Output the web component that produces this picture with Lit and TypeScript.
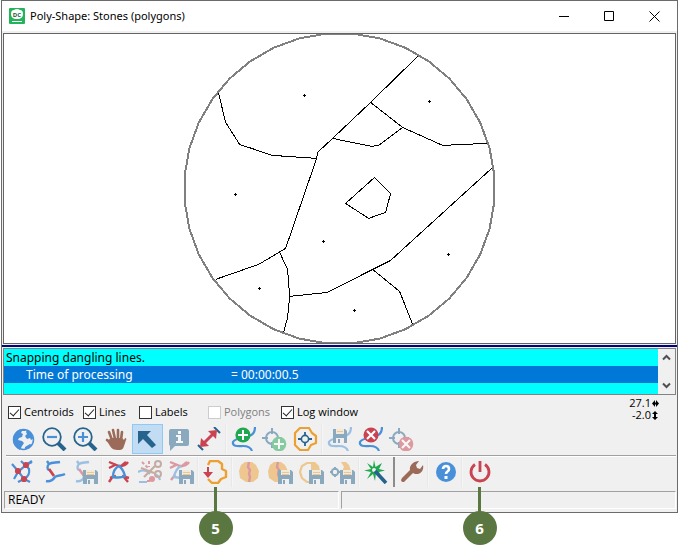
import { LitElement, html, svg, css, nothing, TemplateResult } from "lit";
import { customElement } from "lit/decorators.js";
import { classMap } from "lit/directives/class-map.js";

type Tool = {
  id: string;
  label: string;
  disabled?: boolean;
  active?: boolean;
  callout?: string;
};

const BLUE = "#4a90d9";
const NAVY = "#26648e";
const RED = "#c94450";
const GREEN = "#1fa850";
const ORANGE = "#eda032";
const BROWN = "#9c6a58";

const floppy = svg`
  <path fill=${NAVY} d="M10 10h13l2 2v12h-15z"/>
  <path fill="#f3e3c4" d="M13 10h9v5h-9z"/>
  <path fill=${ORANGE} d="M14 12h7v1h-7zM14 14h7v1h-7z"/>
  <path fill="#f0f0f0" d="M14 19h7v5h-7z"/>
  <path fill=${NAVY} d="M15 20h2v4h-2z"/>`;

const curve = svg`
  <path fill="none" stroke=${BLUE} stroke-width="2.2" d="M24 0c0 5-2 8-6 9-6 2-14 2-16 6-1 5 6 4 10 4 5 0 8 2 9 5"/>`;

const target = svg`
  <circle cx="10" cy="11" r="6" fill="none" stroke=${NAVY} stroke-width="2"/>
  <path stroke=${NAVY} stroke-width="2" d="M10 1v6M10 15v6M0 11h6M14 11h6"/>`;

const stone = "M8 2h7l4 3 3 6-1 7-5 4H9l-6-4-1-7 2-6z";

const icons: Record<string, TemplateResult> = {
  globe: svg`
    <circle cx="12.500" cy="12.500" r="10" fill="#f0f0f0" stroke=${BLUE} stroke-width="1.500"/>
    <path fill=${BLUE} d="M2 13C2 7 6 3 11 2h4l-1 2h-3l-1 2 2 1-1 3-3 1-1 2 4 1 2 2-2 3-2 4C5 21 2 17 2 13zM16 3c4 1 6 5 6 9l-2 1-1-2-3 1-2-3 2-2-1-2zM14 20l5-3 2 1c-1 2-4 4-7 4z"/>`,
  zoomOut: svg`
    <path stroke=${NAVY} stroke-width="4" d="M16 16l7 7"/>
    <circle cx="10" cy="10" r="8.800" fill="#f0f0f0" stroke=${NAVY} stroke-width="1.800"/>
    <path stroke=${BLUE} stroke-width="2.200" d="M5 10h10"/>`,
  zoomIn: svg`
    <path stroke=${NAVY} stroke-width="4" d="M16 16l7 7"/>
    <circle cx="10" cy="10" r="8.800" fill="#f0f0f0" stroke=${NAVY} stroke-width="1.800"/>
    <path stroke=${BLUE} stroke-width="2.200" d="M5 10h10M10 5v10"/>`,
  hand: svg`
    <g fill="none" stroke=${BROWN} stroke-width="2.600" stroke-linecap="round">
      <path d="M8 13L5 5M11 12L9 3M14 12V3M17 13l1-8M8 17l-5-4"/>
    </g>
    <path fill=${BROWN} d="M7 11h11l2 2 1-2c1 0 2 1 1 2l-2 6c-1 4-3 4-6 4-4 0-6-1-8-4L3 14z"/>`,
  pointer: svg`<path fill=${NAVY} d="M3 4h13l-4 4 9 10-4 3-9-9-5 5z"/>`,
  info: svg`
    <path fill=${NAVY} d="M5 2h16q2 0 2 2v13q0 2-2 2H9l-5 5v-5q-1-1-1-2V4q0-2 2-2z"/>
    <path fill="#fff" d="M12 4h3v3h-3zM10 8h5v6h2v2h-7v-2h2v-4h-2z"/>`,
  measure: svg`
    <path stroke=${NAVY} stroke-width="2" d="M1 18l5 5M17 0l6 6"/>
    <path stroke=${RED} stroke-width="3" d="M7 16l9-9"/>
    <path fill=${RED} d="M3 20l1-9 8 8zM20 3l-1 9-8-8z"/>`,
  lineAdd: svg`${curve}
    <circle cx="12" cy="8" r="7.600" fill=${GREEN}/>
    <path stroke="#fff" stroke-width="2" d="M7 8h10M12 3v10"/>`,
  pointAdd: svg`${target}
    <circle cx="17" cy="17" r="7.300" fill=${GREEN}/>
    <path stroke="#fff" stroke-width="2" d="M12 17h10M17 12v10"/>`,
  polygonPoint: svg`
    <path fill="none" stroke=${ORANGE} stroke-width="2.200" stroke-linejoin="round" d="M7 1h9l3 5 4 3v7l-5 2-3 5H7l-5-5V6z"/>
    <circle cx="12" cy="12" r="3.600" fill="none" stroke=${NAVY} stroke-width="1.600"/>
    <path stroke=${NAVY} stroke-width="1.800" d="M12 5v4M12 15v4M5 12h4M15 12h4"/>`,
  lineSave: svg`${curve}
    <path fill=${NAVY} d="M6 2h12l2 2v12H6z"/>
    <path fill="#f3e3c4" d="M9 2h8v5H9z"/><path fill=${ORANGE} d="M10 4h6v1h-6z"/>
    <path fill="#f0f0f0" d="M9 11h8v5H9z"/><path fill=${NAVY} d="M11 12h2v4h-2z"/>`,
  lineDelete: svg`${curve}
    <circle cx="13" cy="8" r="7.500" fill=${RED}/>
    <path stroke="#fff" stroke-width="2.200" d="M9 4l8 8M17 4l-8 8"/>`,
  pointDelete: svg`${target}
    <circle cx="17" cy="17" r="7.300" fill=${RED}/>
    <path stroke="#fff" stroke-width="2.200" d="M13 13l8 8M21 13l-8 8"/>`,
  nodes: svg`
    <path fill="none" stroke=${BLUE} stroke-width="2.200" d="M1 4l6 7M21 1l-6 4-8 7-4 7M7 11l6 8 6 3M15 5l6-3M15 5l3 4c1 5-1 8-5 10l-6 3M13 4l-3-3"/>
    <circle cx="15" cy="5" r="3.100" fill=${RED}/><circle cx="7" cy="11" r="3.100" fill=${RED}/><circle cx="13" cy="19" r="3.100" fill=${RED}/>`,
  snap: svg`
    <path fill="none" stroke=${BLUE} stroke-width="2.400" d="M18 2c-4 1-8 0-11 2-2 2-2 5 0 6M5 1l2 3M23 14c-4 2-8 1-10 3-2 3-4 5-9 4"/>
    <path stroke=${RED} stroke-width="2.800" d="M7 9l5 7"/>`,
  snapSave: svg`
    <path fill="none" stroke=${BLUE} stroke-width="2.400" d="M16 2c-4 1-7 0-10 2-2 2-2 5 0 6M4 1l2 3M3 21c4 1 7-1 8-4"/>
    <path stroke=${RED} stroke-width="2.600" d="M6 9l5 7"/>${floppy}`,
  cross: svg`
    <path fill="none" stroke=${RED} stroke-width="2.400" d="M2 2l10 4c4 0 7-1 9-4M8 5l-6 3M19 2l-6 5M6 16l-4 6M16 16l5 6M3 18l6-2M15 16l7 2"/>
    <path fill="none" stroke=${BLUE} stroke-width="2.400" d="M12 6c-4 2-6 6-6 11 5 1 8 1 12-1-1-4-2-7-6-10z"/>`,
  cut: svg`
    <path fill="none" stroke=${BLUE} stroke-width="2.200" d="M0 12c4-2 9-2 12 2M1 22h8M16 14c2 0 5 2 6 6"/>
    <path fill="none" stroke=${RED} stroke-width="2" stroke-dasharray="3 2" d="M4 2l6 6M11 1v6M9 21h3"/>
    <circle cx="14" cy="19" r="3" fill=${RED}/>
    <path stroke=${BROWN} stroke-width="2.200" d="M3 8l13 5M6 17l11-11"/>
    <circle cx="20" cy="4" r="3" fill="none" stroke=${BROWN} stroke-width="2"/><circle cx="20" cy="14" r="3" fill="none" stroke=${BROWN} stroke-width="2"/>`,
  crossSave: svg`
    <path fill="none" stroke=${RED} stroke-width="2.400" d="M1 2l10 4c4 0 7-1 9-4M7 5l-6 3M18 2l-6 5M2 20l4-5"/>
    <path fill="none" stroke=${BLUE} stroke-width="2.400" d="M12 6c-4 2-6 6-7 11l7 1"/>${floppy}`,
  polygonArrow: svg`
    <path fill="none" stroke=${ORANGE} stroke-width="2.400" stroke-linejoin="round" d="M5 5l2-4h8l4 3v5l4 2v6l-5 2-3 4H9l-4-4"/>
    <path fill=${RED} d="M4 7h2v5h4l-5 6-5-6h4z"/>`,
  stoneSplit: svg`
    <path fill=${ORANGE} d=${stone}/>
    <path fill="none" stroke=${RED} stroke-width="2.400" d="M12 2l-1 5 2 3-1 4 1 3-1 5"/>`,
  stoneSplitSave: svg`
    <path fill=${ORANGE} d="M6 2h7l4 3 3 6-1 7-5 4H7l-6-4-1-7 2-6z"/>
    <path fill="none" stroke=${RED} stroke-width="2.400" d="M10 2L9 7l2 3-1 4 1 3"/>${floppy}`,
  stoneHalfSave: svg`
    <path fill=${ORANGE} d="M12 2h4l4 4 1 5h-9z"/>
    <path fill="none" stroke=${ORANGE} stroke-width="2.200" d="M14 3H8L3 6l-2 6 2 6 5 4h3"/>${floppy}`,
  stonePointSave: svg`
    <path fill=${ORANGE} d="M11 2h5l3 3 2 6h-9l2-4z"/>
    <circle cx="5" cy="12" r="3.200" fill="none" stroke=${NAVY} stroke-width="2"/>
    <path stroke=${NAVY} stroke-width="2" d="M5 7v3M5 14v3M0 12h3M7 12h3"/>${floppy}`,
  wand: svg`
    <path fill=${GREEN} d="M10 0l1.500 7L18 3l-3 6 6 1.500-6 1.500 1 2-3-1-1 0-1 8-2-7-6 5 4-7-7-1.500 7-1.500L3 3l6 4z"/>
    <circle cx="10" cy="10" r="2" fill="#f0f0f0"/>
    <path stroke=${NAVY} stroke-width="3.600" d="M11 11l11 12"/>`,
  wrench: svg`<path fill=${BROWN} d="M17 1l3 0-3 4 1 3 3 1 3-4c1 4-1 8-5 9-2 0-4 0-5-1l-8 8c-1 2-4 1-4-1l1-2 8-8c-1-5 4-9 9-9z"/>`,
  help: svg`
    <circle cx="13" cy="12" r="10" fill=${BLUE}/>
    <path fill="none" stroke="#fff" stroke-width="2.600" d="M10 9c0-4 6-4 6 0 0 3-3 2-3 5"/>
    <path fill="#fff" d="M11.500 16h3v3h-3z"/>`,
  power: svg`
    <path fill="none" stroke=${RED} stroke-width="2.800" d="M8 4.500a9 9 0 1 0 10 0M13 1v11"/>`,
};

const viewTools: Tool[][] = [
  [
    { id: "globe", label: "Full extent" },
    { id: "zoomOut", label: "Zoom out" },
    { id: "zoomIn", label: "Zoom in" },
    { id: "hand", label: "Pan" },
    { id: "pointer", label: "Select", active: true },
    { id: "info", label: "Information", disabled: true },
    { id: "measure", label: "Measure" },
  ],
  [
    { id: "lineAdd", label: "Add line" },
    { id: "pointAdd", label: "Add centroid", disabled: true },
    { id: "polygonPoint", label: "Create centroids" },
  ],
  [
    { id: "lineSave", label: "Save lines", disabled: true },
    { id: "lineDelete", label: "Delete line" },
    { id: "pointDelete", label: "Delete centroid", disabled: true },
  ],
];

const shapeTools: Tool[][] = [
  [
    { id: "nodes", label: "Check nodes" },
    { id: "snap", label: "Snap dangling lines" },
    { id: "snapSave", label: "Save snapped lines", disabled: true },
  ],
  [
    { id: "cross", label: "Find intersections" },
    { id: "cut", label: "Cut lines", disabled: true },
    { id: "crossSave", label: "Save intersections", disabled: true },
  ],
  [{ id: "polygonArrow", label: "Build polygons", callout: "5" }],
  [
    { id: "stoneSplit", label: "Split polygons", disabled: true },
    { id: "stoneSplitSave", label: "Save split polygons", disabled: true },
    { id: "stoneHalfSave", label: "Save polygons", disabled: true },
    { id: "stonePointSave", label: "Save polygons and centroids", disabled: true },
  ],
  [{ id: "wand", label: "Automatic processing" }],
  [{ id: "wrench", label: "Settings" }],
  [{ id: "help", label: "Help" }],
  [{ id: "power", label: "Exit", callout: "6" }],
];

const layers = [
  { label: "Centroids", checked: true, disabled: false },
  { label: "Lines", checked: true, disabled: false },
  { label: "Labels", checked: false, disabled: false },
  { label: "Polygons", checked: false, disabled: true },
  { label: "Log window", checked: true, disabled: false },
];

const lines = [
  "219,93 226,122 240,144 273,155 317,158",
  "418,56 371,102 333,138 318,152 317,158 286,248 259,264 216,279",
  "371,102 403,127 443,145 487,143",
  "403,127 379,145 372,146 333,138",
  "375,177 391,193 386,212 369,218 346,203 375,177",
  "280,252 288,269 290,296 288,317 284,332",
  "290,296 328,292 373,269 391,260 492,168",
  "373,269 400,291 413,324",
];

const centroids = [
  [304, 95], [429, 101], [235, 194], [323, 241], [259, 288], [354, 310], [448, 254],
];

// The outer boundary is digitised as a regular 36-sided polygon.
const boundary = Array.from({ length: 36 }, (_, i) => {
  const a = ((i * 10 + 5) * Math.PI) / 180;
  return `${(339.5 + 155.4 * Math.cos(a)).toFixed(1)},${(188.5 + 155.4 * Math.sin(a)).toFixed(1)}`;
}).join(" ");

@customElement("tool-bar")
class ToolBar extends LitElement {
  static properties = { groups: { attribute: false } };
  declare groups: Tool[][];

  static styles = css`
    :host { display: block; }
    .bar { display: flex; height: 30px; padding-left: 5px; }
    .group { display: flex; }
    .group + .group { border-left: 1px solid #e8e8e8; box-shadow: inset 1px 0 #f6f6f6; padding-left: 2px; }
    .group.strong { border-left: 2px solid #8c8c8c; box-shadow: none; margin-left: 1px; padding-left: 1px; }
    .slot { position: relative; }
    button {
      display: flex; align-items: center; justify-content: center;
      width: 31px; height: 30px; padding: 0; border: 1px solid transparent; background: none;
    }
    .active { background: #c1dcf3; border-color: #90c8f6; }
    svg { display: block; width: 25px; height: 24px; flex: none; }
    button:disabled svg { opacity: 0.5; }
    .callout {
      position: absolute; z-index: 2; top: 100%; left: 0; width: 100%;
      display: flex; flex-direction: column; align-items: center; pointer-events: none;
    }
    .stem { width: 3px; height: 26px; background: #5b7741; }
    .badge {
      width: 34px; height: 34px; border-radius: 50%; margin-top: -2px;
      background: #5b7741; color: #fff; text-align: center;
      font: bold 15px/34px "Noto Sans", "Open Sans", sans-serif;
    }
  `;

  render() {
    return html`<div class="bar" role="toolbar">
      ${this.groups.map(
        (g) => html`<div class=${classMap({ group: true, strong: g[0].id === "wrench" })}>
          ${g.map(
            (t) => html`<div class="slot">
              <button class=${classMap({ active: !!t.active })} ?disabled=${!!t.disabled} aria-label=${t.label} title=${t.label}>
                <svg viewBox="0 0 25 24" aria-hidden="true">${icons[t.id]}</svg>
              </button>
              ${t.callout
                ? html`<div class="callout"><span class="stem"></span><span class="badge">${t.callout}</span></div>`
                : nothing}
            </div>`
          )}
        </div>`
      )}
    </div>`;
  }
}

@customElement("app-root")
class AppRoot extends LitElement {
  static styles = css`
    :host {
      display: block; min-height: 100vh; background: #fff; color: #000;
      font: 12px/16px "Open Sans", "Noto Sans", sans-serif;
    }
    * { box-sizing: border-box; }
    button { padding: 0; border: 0; background: none; display: grid; place-items: center; }
    svg { display: block; }
    .window { margin: 0 1px; border: 1px solid #6b6b6b; background: #f0f0f0; }
    .title { display: flex; align-items: center; height: 30px; padding-left: 7px; background: #fff; }
    .logo { width: 16px; height: 16px; margin-right: 5px; }
    .logo text { font: bold 6px "Open Sans", sans-serif; }
    h1 { flex: 1; margin: 0; font: 400 11px/16px "Noto Sans", "Open Sans", sans-serif; }
    .title button { width: 45px; height: 30px; }
    .body { padding: 2px 1px 3px; }
    .canvas { border: 1px solid #646464; background: #fff; }
    .canvas svg { width: 100%; height: auto; }
    .splitter { height: 2px; margin: 1px -1px; background: #000080; }
    .log { display: flex; height: 47px; border: 1px solid #828282; background: #0ff; }
    .log ul { flex: 1; margin: 0; padding: 0; list-style: none; font-family: "Noto Sans", "Open Sans", sans-serif; }
    .log li { display: flex; height: 17px; padding-left: 2px; line-height: 18px; }
    .log li.selected { padding-left: 22px; background: #0078d7; color: #fff; }
    .key { width: 205px; }
    .scroll { display: flex; flex-direction: column; justify-content: space-between; width: 17px; background: #f0f0f0; }
    .scroll button { width: 17px; height: 17px; }
    .options { display: flex; justify-content: space-between; height: 29px; padding: 0 17px 0 5px; }
    .layers {
      display: grid; grid-template-columns: 75px 56px 69px 73px auto; align-content: start;
      padding-top: 9px; font-size: 11px; white-space: nowrap;
    }
    .layers label { display: flex; align-items: center; gap: 3px; height: 16px; }
    .layers .off { color: #808080; }
    input {
      appearance: none; width: 13px; height: 13px; margin: 0; border: 1px solid #333; background: #fff;
      display: grid; place-items: center;
    }
    input:checked::after { content: ""; width: 4px; height: 8px; margin-top: -2px; border: solid #222; border-width: 0 1px 1px 0; transform: rotate(42deg); }
    input:disabled { border-color: #ccc; }
    .position { padding-top: 2px; font-size: 11px; line-height: 12px; }
    .position div { display: flex; align-items: center; justify-content: flex-end; gap: 1px; }
    .position svg { width: 7px; height: 9px; }
    .rule { height: 2px; margin: 1px 0 0 3px; border-top: 1px solid #a0a0a0; background: #fff; }
    .status { display: grid; grid-template-columns: 1fr 1fr; gap: 2px; padding: 4px 0 0 1px; }
    .status div { height: 18px; padding-left: 3px; border: 1px solid; border-color: #a0a0a0 #fff #fff #a0a0a0; line-height: 16px; font-size: 12px; }
  `;

  render() {
    return html`<main class="window">
      <header class="title">
        <svg class="logo" viewBox="0 0 16 16" aria-hidden="true">
          <rect width="16" height="16" rx="1" fill="#24b35b"/>
          <path fill="#fff" d="M5 2q3-2 6 0 3 0 3 4 0 4-4 5H6Q2 10 2 6q0-4 3-4zM3 13h10v1H3z"/>
          <text x="8" y="9" text-anchor="middle" fill="#185c32">DC</text>
        </svg>
        <h1>Poly-Shape: Stones (polygons)</h1>
        <button aria-label="Minimize"><svg width="11" height="11"><path d="M0 5.500h10" stroke="#000"/></svg></button>
        <button aria-label="Maximize"><svg width="11" height="11"><path d="M.5.5h9v9h-9z" fill="none" stroke="#000"/></svg></button>
        <button aria-label="Close"><svg width="11" height="11"><path d="M.5.5l10 10M10.500.5l-10 10" stroke="#000"/></svg></button>
      </header>
      <div class="body">
        <section class="canvas">
          <svg viewBox="4 34 671 309" role="img" aria-label="Map of stones">
            <polygon points=${boundary} fill="none" stroke="#808080" stroke-width="2" shape-rendering="crispEdges"/>
            <g fill="none" stroke="#000" shape-rendering="crispEdges">
              <g transform="translate(-.4 .4)">${lines.map((p) => svg`<polyline points=${p}/>`)}</g>
              <g transform="translate(.5 .5)">${centroids.map(([x, y]) => svg`<path d="M${x - 1.5} ${y}h3M${x} ${y - 1.5}v3"/>`)}</g>
            </g>
          </svg>
        </section>
        <div class="splitter"></div>
        <section class="log">
          <ul>
            <li>Snapping dangling lines.</li>
            <li class="selected"><span class="key">Time of processing</span><span>= 00:00:00.5</span></li>
          </ul>
          <div class="scroll">
            <button aria-label="Scroll up"><svg width="9" height="7"><path d="M1 5.500l3.500-3.500L8 5.500" fill="none" stroke="#505050" stroke-width="2"/></svg></button>
            <button aria-label="Scroll down"><svg width="9" height="7"><path d="M1 1.500L4.500 5 8 1.500" fill="none" stroke="#505050" stroke-width="2"/></svg></button>
          </div>
        </section>
        <section class="options">
          <div class="layers">
            ${layers.map(
              (l) => html`<label class=${classMap({ off: l.disabled })}>
                <input type="checkbox" .checked=${l.checked} ?disabled=${l.disabled} />${l.label}
              </label>`
            )}
          </div>
          <div class="position">
            <div>27.1<svg viewBox="0 0 7 9"><path d="M0 4.500L3 1v2.500h1V1l3 3.500L4 8V5.500H3V8z"/></svg></div>
            <div>-2.0<svg viewBox="0 0 7 9"><path d="M3 0L0 3h2v3H0l3 3 3-3H4V3h2z"/></svg></div>
          </div>
        </section>
        <tool-bar .groups=${viewTools}></tool-bar>
        <div class="rule"></div>
        <tool-bar .groups=${shapeTools}></tool-bar>
        <footer class="status"><div>READY</div><div></div></footer>
      </div>
    </main>`;
  }
}
